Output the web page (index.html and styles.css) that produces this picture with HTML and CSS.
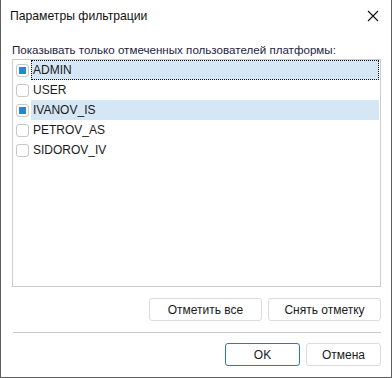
FILE: index.html
```html
<!DOCTYPE html>
<html lang="ru">
<head>
  <meta charset="UTF-8">
  <title>Параметры фильтрации</title>
  <link rel="stylesheet" href="styles.css">
</head>
<body>
  <div class="dialog">
    <div class="title-bar">
      <span class="title">Параметры фильтрации</span>
      <span class="close-btn">
        <svg width="12" height="12" viewBox="0 0 12 12"><path d="M1 1L11 11M11 1L1 11" stroke="#111" stroke-width="1.1" fill="none"/></svg>
      </span>
    </div>

    <div class="content">
      <div class="label">Показывать только отмеченных пользователей платформы:</div>
      <div class="list">
        <div class="row selected focused"><span class="check checked"></span><span class="name">ADMIN</span></div>
        <div class="row"><span class="check"></span><span class="name">USER</span></div>
        <div class="row selected"><span class="check checked"></span><span class="name">IVANOV_IS</span></div>
        <div class="row"><span class="check"></span><span class="name">PETROV_AS</span></div>
        <div class="row"><span class="check"></span><span class="name">SIDOROV_IV</span></div>
      </div>

      <div class="list-actions">
        <button class="btn">Отметить все</button>
        <button class="btn">Снять отметку</button>
      </div>

      <div class="separator"></div>

      <div class="dialog-actions">
        <button class="btn btn-default">OK</button>
        <button class="btn">Отмена</button>
      </div>
    </div>
  </div>
</body>
</html>
```

FILE: styles.css
```css
* {
  margin: 0;
  padding: 0;
  box-sizing: border-box;
  font-family: 'Liberation Sans', Arial, sans-serif;
}

body {
  width: 392px;
  height: 378px;
  background: #fff;
  overflow: hidden;
}

.dialog {
  width: 392px;
  height: 378px;
  background: #fff;
  border: 1px solid #5f5f5f;
  border-top: none;
  display: flex;
  flex-direction: column;
}

.title-bar {
  height: 33px;
  display: flex;
  align-items: center;
  justify-content: space-between;
  padding: 0 8px 2px 9px;
}

.title {
  font-size: 12.2px;
  color: #111;
}

.close-btn {
  width: 20px;
  height: 20px;
  display: flex;
  align-items: center;
  justify-content: center;
}

.content {
  padding: 0 10px 0 11px;
  display: flex;
  flex-direction: column;
}

.label {
  font-size: 11.6px;
  color: #1f2340;
  height: 26px;
  padding-top: 10px;
  line-height: 14px;
}

.list {
  height: 228px;
  border: 1px solid #cccccc;
  padding: 0 1px;
}

.row {
  height: 20px;
  display: flex;
  align-items: center;
  font-size: 12px;
  color: #1a1a1a;
}

.check {
  width: 13px;
  height: 13px;
  border: 1px solid #c8c8c8;
  border-radius: 3px;
  margin: 0 2px 0 2px;
  display: flex;
  align-items: center;
  justify-content: center;
  flex-shrink: 0;
}

.check.checked::after {
  content: '';
  width: 7px;
  height: 7px;
  background: #1e8ad2;
}

.name {
  flex: 1;
  height: 20px;
  line-height: 20px;
  padding-left: 2px;
}

.row.selected .name {
  background: #d5e7f5;
}

.row.focused .name {
  outline: 1px dotted #111;
  outline-offset: -1px;
}

.list-actions {
  display: flex;
  justify-content: flex-end;
  gap: 6px;
  margin-top: 11px;
}

.btn {
  width: 113px;
  height: 23px;
  background: #fff;
  border: 1px solid #dcdcdc;
  border-radius: 3px;
  font-size: 12px;
  color: #1a1a1a;
}

.separator {
  height: 1px;
  background: #c8c8c8;
  margin: 11px 0 10px 1px;
}

.dialog-actions {
  display: flex;
  justify-content: flex-end;
  gap: 6px;
}

.dialog-actions .btn {
  width: 75px;
}

.btn-default {
  border-color: #2a7ab8;
}
```
